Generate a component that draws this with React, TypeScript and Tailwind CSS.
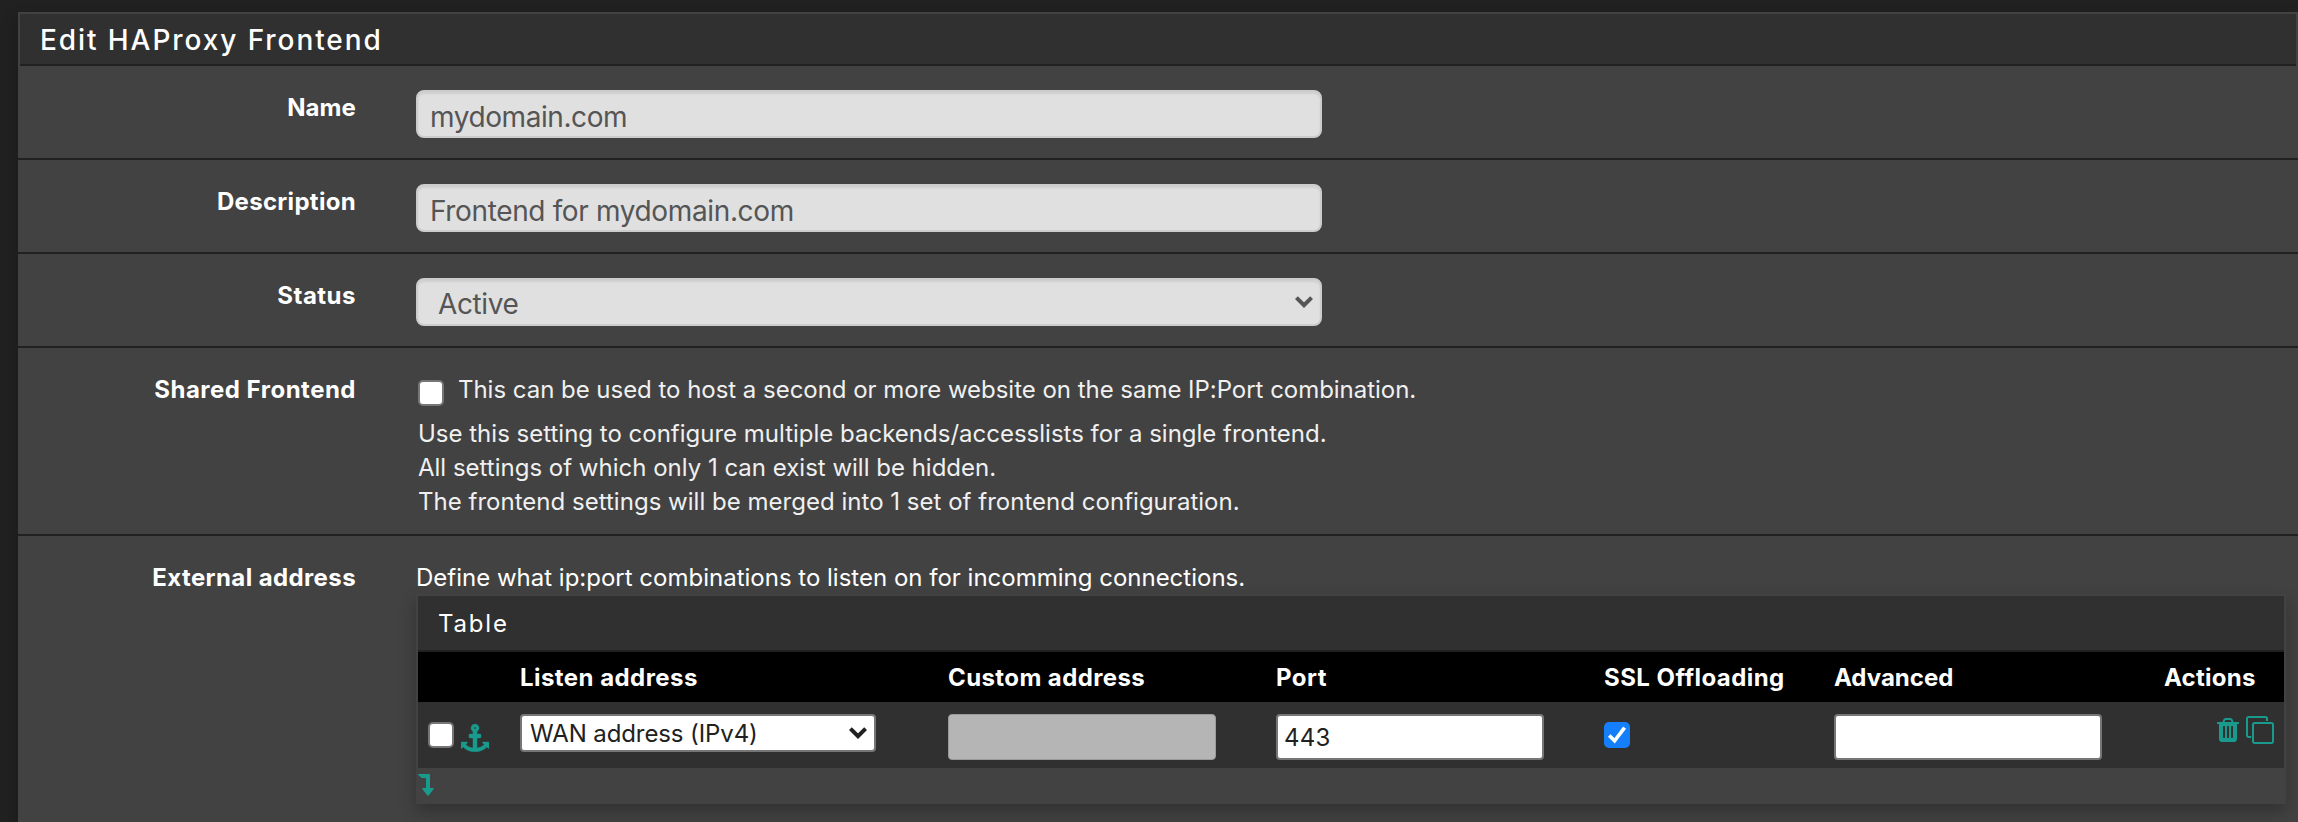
import type { ReactNode } from 'react';

const fieldClass =
  'block h-12 w-[906px] appearance-none rounded-lg border-2 border-[#cccccc] bg-[#e0e0e0] text-[28px] text-[#555555] shadow-[inset_0_2px_2px_rgba(0,0,0,0.075)] outline-none';
const cellInputClass =
  'block h-[46px] w-[268px] appearance-none rounded-[4px] border-2 border-[#767676] bg-white px-[6px] text-2xl tracking-[0.3px] text-[#212121] outline-none';

function Chevron({ className }: { className: string }) {
  return (
    <svg viewBox="0 0 18 12" className={className} fill="none" stroke="currentColor" strokeWidth="4">
      <path d="M1.4 1.6 L9 9.2 L16.6 1.6" />
    </svg>
  );
}

function AnchorIcon() {
  return (
    <svg viewBox="0 0 1792 1792" className="size-7" fill="currentColor" stroke="currentColor" strokeWidth="30">
      <path d="M960 256q0-26-19-45t-45-19-45 19-19 45 19 45 45 19 45-19 19-45zm832 928v352q0 22-20 30-8 2-12 2-12 0-23-9l-93-93q-119 143-318.500 226.500t-429.500 83.500-429.500-83.500-318.500-226.500l-93 93q-9 9-23 9-4 0-12-2-20-8-20-30v-352q0-14 9-23t23-9h352q22 0 30 20 8 19-7 35l-100 100q67 91 189.500 153.500t271.500 82.500v-647h-192q-26 0-45-19t-19-45v-128q0-26 19-45t45-19h192v-163q-58-34-93-92.500t-35-128.500q0-106 75-181t181-75 181 75 75 181q0 70-35 128.500t-93 92.500v163h192q26 0 45 19t19 45v128q0 26-19 45t-45 19h-192v647q149-20 271.500-82.500t189.500-153.500l-100-100q-15-16-7-35 8-20 30-20h352q14 0 23 9t9 23z" />
    </svg>
  );
}

function TrashIcon() {
  return (
    <svg viewBox="192 128 1408 1536" className="mt-[2px] h-6 w-[22px]" fill="currentColor">
      <path d="M704 1376v-704q0-14-9-23t-23-9h-64q-14 0-23 9t-9 23v704q0 14 9 23t23 9h64q14 0 23-9t9-23zm256 0v-704q0-14-9-23t-23-9h-64q-14 0-23 9t-9 23v704q0 14 9 23t23 9h64q14 0 23-9t9-23zm256 0v-704q0-14-9-23t-23-9h-64q-14 0-23 9t-9 23v704q0 14 9 23t23 9h64q14 0 23-9t9-23zm-544-992h448l-48-117q-7-9-17-11h-317q-10 2-17 11zm928 32v64q0 14-9 23t-23 9h-96v948q0 83-47 143.500t-113 60.500h-832q-66 0-113-58.500t-47-141.500v-952h-96q-14 0-23-9t-9-23v-64q0-14 9-23t23-9h309l70-167q15-37 54-63t79-26h320q40 0 79 26t54 63l70 167h309q14 0 23 9t9 23z" />
    </svg>
  );
}

function CloneIcon() {
  return (
    <svg viewBox="0 0 1792 1792" className="size-7" fill="currentColor">
      <path d="M1664 1632v-1088q0-13-9.500-22.500t-22.500-9.500h-1088q-13 0-22.500 9.500t-9.500 22.500v1088q0 13 9.500 22.500t22.500 9.500h1088q13 0 22.500-9.500t9.500-22.500zm128-1088v1088q0 66-47 113t-113 47h-1088q-66 0-113-47t-47-113v-1088q0-66 47-113t113-47h1088q66 0 113 47t47 113zm-384-384v160h-128v-160q0-13-9.500-22.500t-22.500-9.500h-1088q-13 0-22.500 9.500t-9.500 22.500v1088q0 13 9.500 22.500t22.500 9.500h160v128h-160q-66 0-113-47t-47-113v-1088q0-66 47-113t113-47h1088q66 0 113 47t47 113z" />
    </svg>
  );
}

function LevelDownIcon() {
  return (
    <svg viewBox="0 0 16 22" className="h-[22px] w-4" fill="currentColor">
      <path d="M0 0H11.600Q12 0 12 0.500V14H15.300Q16.200 14 15.700 14.900L10.600 21.400Q10 22 9.400 21.400L4.300 14.900Q3.800 14 4.700 14H8V4H4.200Q3.700 4 3.400 3.700L0.200 0.700Z" />
    </svg>
  );
}

function Checkbox({ checked = false }: { checked?: boolean }) {
  return (
    <span
      className={
        checked
          ? 'flex size-[26px] shrink-0 items-center justify-center rounded-[5px] bg-[#157efb] text-white'
          : 'block size-[26px] shrink-0 rounded-[5px] border-2 border-[#767676] bg-white'
      }
    >
      {checked && (
        <svg viewBox="0 0 26 26" className="size-[26px]" fill="none" stroke="currentColor" strokeWidth="3.6">
          <path d="M5.200 13.400 L10.600 18.800 L20.600 5.600" />
        </svg>
      )}
    </span>
  );
}

function Row({
  label,
  children,
  last = false,
  labelClass = 'tracking-[0.4px]',
}: {
  label: string;
  children: ReactNode;
  last?: boolean;
  labelClass?: string;
}) {
  return (
    <div className={last ? 'flex gap-[60px] pt-6' : 'flex gap-[60px] border-b-2 border-[#212121] pt-6'}>
      <div className={`w-[338px] shrink-0 pt-px text-right font-bold ${labelClass}`}>{label}</div>
      <div className="min-w-0 flex-1">{children}</div>
    </div>
  );
}

const columns = 'grid grid-cols-[102px_428px_328px_328px_230px_330px_1fr]';

export default function App() {
  return (
    <div className="h-[822px] overflow-hidden bg-[#212121] pt-3 pl-[18px] font-['Inter',sans-serif] text-2xl leading-[34px] text-white">
      <div className="h-[900px] bg-[#424242] shadow-[0_8px_16px_rgba(0,0,0,0.25)]">
        <div className="px-[2px] pt-[2px]">
          <h2 className="h-[52px] border-b-2 border-[#212121] bg-[#303030] pt-[1px] pl-5 text-[28px] leading-[50px] font-medium tracking-[1.92px]">
            Edit HAProxy Frontend
          </h2>
        </div>

        <Row label="Name" labelClass="tracking-[0.1px]">
          <input className={`${fieldClass} mb-5 pt-[5px] pl-3 tracking-[-0.42px]`} defaultValue="mydomain.com" />
        </Row>
        <Row label="Description" labelClass="tracking-[0.3px]">
          <input className={`${fieldClass} mb-5 pt-[5px] pl-3 tracking-[-0.36px]`} defaultValue="Frontend for mydomain.com" />
        </Row>
        <Row label="Status" labelClass="tracking-[0.5px]">
          <div className="relative mb-5 w-[906px]">
            <select className={`${fieldClass} pt-1 pl-5 tracking-[-0.4px]`}>
              <option>Active</option>
            </select>
            <Chevron className="pointer-events-none absolute top-[18px] right-[9px] h-3 w-[18px] text-[#555555]" />
          </div>
        </Row>
        <Row label="Shared Frontend" labelClass="tracking-[0.5px]">
          <div className="flex h-[34px] gap-[14px] pl-[2px] tracking-[-0.03px] text-[#f0f0f0]">
            <div className="pt-2">
              <Checkbox />
            </div>
            <span className="pt-px">This can be used to host a second or more website on the same IP:Port combination.</span>
          </div>
          <div className="pt-[11px] pb-[15px] pl-[2px] text-[#f0f0f0]">
            <p>Use this setting to configure multiple backends/accesslists for a single frontend.</p>
            <p>All settings of which only 1 can exist will be hidden.</p>
            <p className="tracking-[0.02px]">The frontend settings will be merged into 1 set of frontend configuration.</p>
          </div>
        </Row>
        <Row label="External address" last>
          <p className="h-[34px] pt-px">Define what ip:port combinations to listen on for incomming connections.</p>
          <div className="mr-3 border-2 border-[#424242] bg-[#424242] shadow-[0_8px_16px_rgba(0,0,0,0.25)]">
            <h3 className="h-14 border-b-2 border-[#212121] bg-[#303030] pl-5 leading-[56px] tracking-[1.8px]">Table</h3>
            <div className={`${columns} h-[50px] bg-black leading-[52px] font-bold tracking-[0.45px]`}>
              <span />
              <span>Listen address</span>
              <span className="tracking-[0.4px]">Custom address</span>
              <span>Port</span>
              <span>SSL Offloading</span>
              <span className="tracking-normal">Advanced</span>
              <span className="tracking-[0.25px]">Actions</span>
            </div>
            <div className={`${columns} h-[66px] bg-[#303030] pt-3`}>
              <div className="flex gap-[7px] pl-[10px] text-[#189a8c]">
                <div className="pt-2">
                  <Checkbox />
                </div>
                <div className="pt-[10px]">
                  <AnchorIcon />
                </div>
              </div>
              <div className="relative h-[38px] w-[356px]">
                <select className="block h-[38px] w-[356px] appearance-none rounded-[4px] border-2 border-[#767676] bg-white pt-[2px] pl-2 text-2xl leading-[32px] tracking-[-0.1px] text-[#212121] outline-none">
                  <option>WAN address (IPv4)</option>
                </select>
                <Chevron className="pointer-events-none absolute top-[13px] right-[9px] h-3 w-[18px] text-[#212121]" />
              </div>
              <div>
                <div className="h-[46px] w-[268px] rounded-[4px] border border-[#9a9a9a] bg-[#b5b5b5]" />
              </div>
              <div>
                <input className={cellInputClass} defaultValue="443" />
              </div>
              <div className="pt-2">
                <Checkbox checked />
              </div>
              <div>
                <input className={cellInputClass} />
              </div>
              <div className="flex items-start justify-end gap-[7px] pt-[2px] pr-[10px] text-[#189a8c]">
                <TrashIcon />
                <CloneIcon />
              </div>
            </div>
            <div className="h-[34px] pt-[6px] text-[#189a8c]">
              <LevelDownIcon />
            </div>
          </div>
        </Row>
      </div>
    </div>
  );
}
